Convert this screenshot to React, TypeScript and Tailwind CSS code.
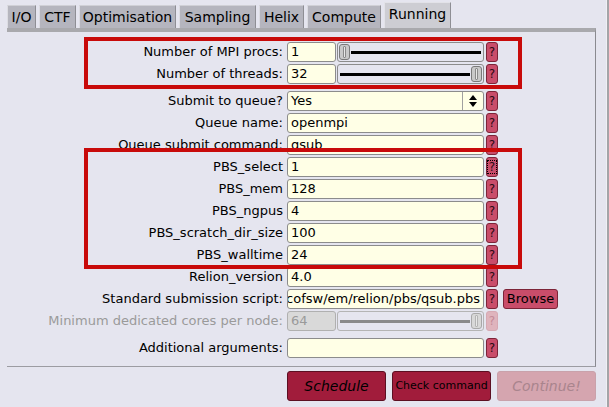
import type { ReactNode } from 'react';

const tabs = [
  { name: 'I/O', w: 'w-[29px]' },
  { name: 'CTF', w: 'w-[37px]' },
  { name: 'Optimisation', w: 'w-[97px]' },
  { name: 'Sampling', w: 'w-[77px]' },
  { name: 'Helix', w: 'w-[45px]' },
  { name: 'Compute', w: 'w-[74px]' },
];

function Help({ disabled, focus }: { disabled?: boolean; focus?: boolean }) {
  return (
    <div
      className={`ml-[2px] flex h-[20px] w-[12px] shrink-0 items-center justify-center rounded-[3px] border text-[12px] leading-none ${
        disabled
          ? 'border-[#d6a9b3] bg-[#dfb4bd] text-[#c48b98]'
          : 'border-[#7c2438] bg-[#c94d6a] text-[#2a0a12]'
      }`}
    >
      <span className={focus ? 'border border-dotted border-black px-[1px]' : ''}>?</span>
    </div>
  );
}

function Field({ value, w = 'w-[197px]', disabled }: { value: string; w?: string; disabled?: boolean }) {
  return (
    <div
      className={`flex h-[20px] ${w} shrink-0 items-center overflow-hidden whitespace-nowrap rounded-[3px] border px-[3px] text-[13px] ${
        disabled ? 'border-[#b0b0b0] bg-[#d9d9d9] text-[#9a9a9a]' : 'border-[#8c8c8c] bg-[#ffffe6] text-black'
      }`}
    >
      {value}
    </div>
  );
}

function Slider({ pos, disabled }: { pos: 'left' | 'right'; disabled?: boolean }) {
  const line = disabled ? 'bg-[#8a8a8a]' : 'bg-black';
  const thumb = (
    <div
      className={`flex h-[16px] w-[11px] shrink-0 items-center justify-center rounded-[3px] border ${
        disabled ? 'border-[#a8a8a8] bg-[#d8d8d8]' : 'border-[#7a7a7a] bg-[#c9c9c9]'
      }`}
    >
      <div className={`h-[12px] w-[3px] rounded-[1px] border ${disabled ? 'border-[#b4b4b4]' : 'border-[#8a8a8a]'} bg-[#e8e8e8]`} />
    </div>
  );
  return (
    <div
      className={`ml-[1px] flex h-[20px] w-[147px] shrink-0 items-center rounded-[3px] border px-[1px] ${
        disabled ? 'border-[#b4b4b4]' : 'border-[#8c8c8c]'
      }`}
    >
      {pos === 'left' && thumb}
      <div className={`mx-[1px] h-[3px] flex-1 ${line}`} />
      {pos === 'right' && thumb}
    </div>
  );
}

function Row({ label, children, disabled, mt }: { label: string; children: ReactNode; disabled?: boolean; mt?: string }) {
  return (
    <div className={`flex h-[20px] items-center ${mt ?? 'mt-[2px]'}`}>
      <div className={`w-[280px] shrink-0 pr-[4px] text-right text-[13px] ${disabled ? 'text-[#9a9a9a]' : 'text-black'}`}>
        {label}
      </div>
      {children}
    </div>
  );
}

export default function App() {
  return (
    <div className="relative flex h-[407px] w-[609px] overflow-hidden bg-[#e5e5ef] font-['DejaVu_Sans',sans-serif]">
      <div className="flex w-[606px] flex-col">
        {/* tabs */}
        <div className="flex h-[28px] items-end gap-[3px] pl-[7px]">
          {tabs.map((t) => (
            <div
              key={t.name}
              className={`flex h-[23px] ${t.w} items-center justify-center border-l border-t border-l-[#dcdce2] border-t-[#d0d0d6] border-r border-r-[#8e8e94] bg-[#b5b5be] text-[14px] text-black`}
            >
              {t.name}
            </div>
          ))}
          <div className="flex h-[26px] w-[67px] items-center justify-center border-l border-t border-l-[#e2e2e8] border-t-[#e2e2e8] border-r border-r-[#8e8e94] bg-[#cdcdd3] pb-[2px] text-[14px] text-black">
            Running
          </div>
        </div>

        {/* panel */}
        <div className="ml-[7px] flex h-[339px] w-[589px] flex-col border-b border-r border-b-[#9c9ca2] border-r-[#8a8a90] border-t-[4px] border-t-[#a9a9ad] pt-[6px]">
          <Row label="Number of MPI procs:" mt="mt-[4px]">
            <Field value="1" w="w-[49px]" />
            <Slider pos="left" />
            <Help />
          </Row>
          <Row label="Number of threads:">
            <Field value="32" w="w-[49px]" />
            <Slider pos="right" />
            <Help />
          </Row>

          <Row label="Submit to queue?" mt="mt-[7px]">
            <div className="flex h-[20px] w-[197px] shrink-0 items-center rounded-[3px] border border-[#8c8c8c] bg-[#ffffe6] text-[13px]">
              <span className="flex-1 px-[3px]">Yes</span>
              <div className="flex h-full w-[21px] flex-col items-center justify-center border-l border-[#a0a0a0] gap-[2px]">
                <svg width="8" height="5" viewBox="0 0 8 5"><path d="M0 5 L4 0 L8 5 Z" fill="#000" /></svg>
                <svg width="8" height="5" viewBox="0 0 8 5"><path d="M0 0 L4 5 L8 0 Z" fill="#000" /></svg>
              </div>
            </div>
            <Help />
          </Row>
          <Row label="Queue name:">
            <Field value="openmpi" />
            <Help />
          </Row>
          <Row label="Queue submit command:">
            <Field value="qsub" />
            <Help />
          </Row>
          <Row label="PBS_select">
            <Field value="1" />
            <Help focus />
          </Row>
          <Row label="PBS_mem">
            <Field value="128" />
            <Help />
          </Row>
          <Row label="PBS_ngpus">
            <Field value="4" />
            <Help />
          </Row>
          <Row label="PBS_scratch_dir_size">
            <Field value="100" />
            <Help />
          </Row>
          <Row label="PBS_walltime">
            <Field value="24" />
            <Help />
          </Row>
          <Row label="Relion_version">
            <Field value="4.0" />
            <Help />
          </Row>
          <Row label="Standard submission script:">
            <div className="flex h-[20px] w-[197px] shrink-0 items-center justify-end overflow-hidden whitespace-nowrap rounded-[3px] border border-[#8c8c8c] bg-[#ffffe6] pr-[3px] text-[13px]">
              <span>cofsw/em/relion/pbs/qsub.pbs</span>
            </div>
            <Help />
            <button className="ml-[5px] flex h-[20px] w-[55px] items-center justify-center rounded-[3px] border border-[#7c2438] bg-[#c94d6a] text-[13px] text-black">
              Browse
            </button>
          </Row>
          <Row label="Minimum dedicated cores per node:" disabled>
            <Field value="64" w="w-[49px]" disabled />
            <Slider pos="right" disabled />
            <Help disabled />
          </Row>
          <Row label="Additional arguments:" mt="mt-[7px]">
            <Field value="" />
            <Help />
          </Row>
        </div>

        {/* action buttons */}
        <div className="mt-[4px] flex gap-[6px] pl-[287px]">
          <div className="flex h-[30px] w-[99px] items-center justify-center rounded-[3px] border border-[#5c0f22] bg-[#a11c3b] text-[14px] italic text-black">
            Schedule
          </div>
          <div className="flex h-[30px] w-[99px] items-center justify-center rounded-[3px] border border-[#5c0f22] bg-[#a11c3b] text-[11px] text-black">
            Check command
          </div>
          <div className="flex h-[30px] w-[99px] items-center justify-center rounded-[3px] border border-[#c9a2ab] bg-[#d5a5af] text-[14px] italic text-[#a9848d]">
            Continue!
          </div>
        </div>
      </div>

      {/* right edge */}
      <div className="w-[3px] border-l border-[#f0f0f4] bg-[#a4a4a8]" />

      {/* annotation boxes */}
      <div className="absolute left-[84px] top-[37px] h-[52px] w-[438px] border-[4px] border-[#c80a0a]" />
      <div className="absolute left-[84px] top-[148px] h-[121px] w-[438px] border-[4px] border-[#c80a0a]" />
    </div>
  );
}
